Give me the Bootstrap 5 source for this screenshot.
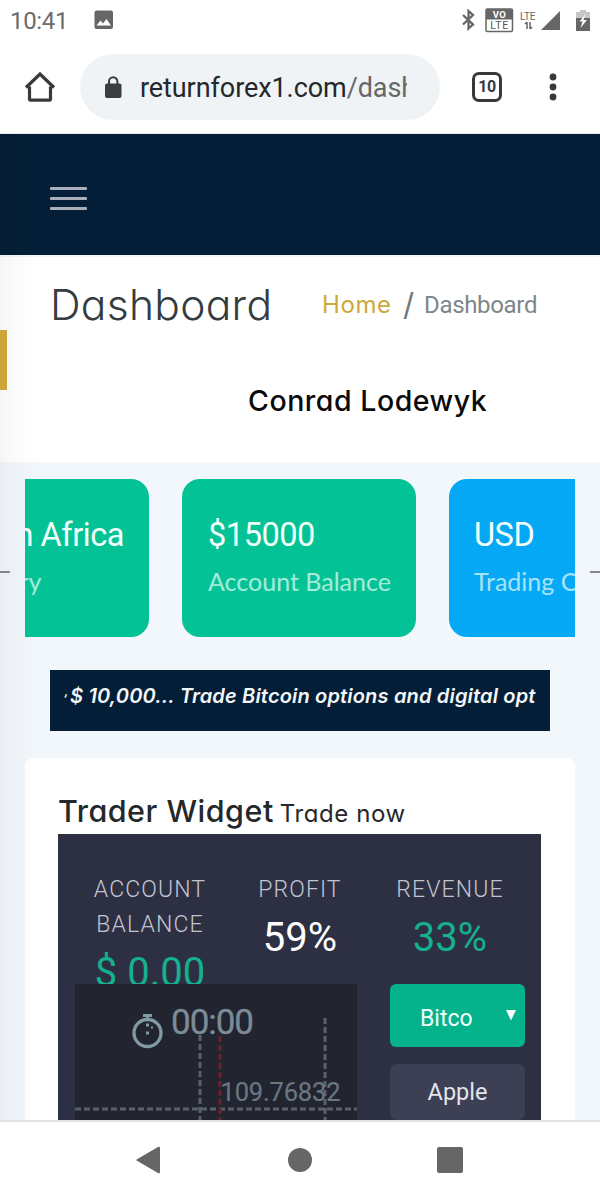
<!DOCTYPE html>
<html lang="en">
<head>
<meta charset="utf-8">
<meta name="viewport" content="width=device-width, initial-scale=1">
<title>Dashboard</title>
<link href="https://cdn.jsdelivr.net/npm/bootstrap@5.3.0/dist/css/bootstrap.min.css" rel="stylesheet">
<script src="https://cdn.jsdelivr.net/npm/bootstrap@5.3.0/dist/js/bootstrap.bundle.min.js"></script>
<style>
  body { width: 600px; height: 1200px; overflow: hidden; background: #fff; font-family: Roboto, "Liberation Sans", sans-serif; }
  svg { display: block; flex: none; }
  .geo { font-family: Inter, "Open Sans", sans-serif; font-feature-settings: "cv11"; }
  .nowrap { white-space: nowrap; }

  .status { height: 40px; padding: 0 9px 0 10px; color: #6b6b6b; }
  .clock { font-size: 24px; line-height: 42px; width: 84px; letter-spacing: -.35px; padding-top: 1px; }
  .toolbar { height: 94px; padding-left: 24px; border-bottom: 1px solid #e3e9ee; }
  .omnibox { width: 360px; height: 66px; border-radius: 33px; background: #f0f3f5; margin: 1px 0 0 24px; padding-left: 24px; }
  .url { width: 267px; margin: 2px 0 0 18px; font-size: 27px; letter-spacing: -.08px; color: #24282b; }
  .url i { font-style: normal; color: #64686b; }
  .tabs { width: 30px; height: 30px; border: 3px solid #37393b; border-radius: 7px; font-size: 16px; font-weight: 700; letter-spacing: -.5px; color: #37393b; margin-left: 32px; padding-top: 1px; }

  .page { height: 986px; background: #f2f7fc; }
  .edge-shade { left: 0; top: 0; width: 36px; height: 986px; background: linear-gradient(90deg, rgba(0,0,0,.035), rgba(0,0,0,.02) 40%, transparent); z-index: 3; }
  .topnav { height: 121px; background: #041e37; padding: 8px 0 0 50px; }
  .burger { display: grid; gap: 7px; width: 37px; }
  .burger b { height: 3.2px; background: #a9aebb; border-radius: 1px; }
  .pagehead { margin-top: 2px; height: 205px; background: #fff; }
  .headline { height: 96px; padding-left: 50px; }
  .headline h1 { font-size: 42.500px; font-weight: 300; color: #343c40; margin: 0; width: 272px; line-height: 96px; letter-spacing: .3px; }
  .crumb-home { color: #cda83b; font-size: 24px; width: 81px; letter-spacing: .6px; }
  .crumb-sep { color: #6f777c; font-size: 31px; width: 21px; }
  .crumb-now { color: #7d8689; font-size: 24px; letter-spacing: -.33px; }
  .person { padding-left: 248px; font-size: 28.500px; font-weight: 500; color: #0a0a0a; line-height: 42px; margin-top: 27px; letter-spacing: .53px; }
  .gold-tab { left: 0; top: 196px; width: 7px; height: 60px; background: #cda438; z-index: 4; }

  .carousel-row { height: 158px; margin-top: 17px; }
  .arrow { width: 10px; height: 2px; background: #85898f; margin-top: 27px; }
  .track { width: 550px; overflow: hidden; }
  .stat { flex: none; width: 234px; margin-right: 33px; height: 158px; border-radius: 18px; background: #03c396; color: #f2fffb; padding: 36px 0 0 26px; }
  .stat:first-child { margin-left: -110px; padding-left: 16px; }
  .stat.sky { background: #04a8f5; padding-left: 25px; }
  .stat-main { font-size: 32.500px; line-height: 40px; letter-spacing: -.45px; }
  .stat-sub { font-family: Lato, sans-serif; font-size: 25px; line-height: 30px; margin-top: 11px; opacity: .68; }

  .ticker { height: 61px; margin: 33px 50px 0; padding: 0 13px; background: #041e37; color: #f3f6f9; }
  .ticker div { font-size: 20px; font-weight: 600; font-style: italic; line-height: 53px; letter-spacing: .17px; }
  .ticker small { display: inline-block; width: 7px; font-size: 12px; letter-spacing: 0; }
  .panel { height: 362px; margin: 27px 25px 0; padding: 32px 34px 0 33px; background: #fff; border-radius: 8px 8px 0 0; }
  .panel h2 { font-size: 30.500px; font-weight: 500; line-height: 42px; height: 44px; margin: 0; color: #25282a; letter-spacing: .5px; }
  .panel h2 small { font-size: 24px; font-weight: 400; line-height: 30px; margin-left: 6px; letter-spacing: .6px; }
  .widget { height: 286px; background: #2d3043; padding: 38px 16px 0 17px; overflow: hidden; }
  .figures { height: 112px; overflow: hidden; text-align: center; }
  .fig-label { font-size: 23px; font-weight: 300; line-height: 35px; letter-spacing: 1.1px; color: #c2c4d0; }
  .fig-val { font-size: 40px; line-height: 62px; color: #fff; }
  .green { color: #15b08d; }
  .chart { width: 282px; height: 136px; background: #222430; }
  .side { width: 135px; }
  .pick { height: 63px; border-radius: 6px; background: #04b28b; color: #f2fffb; font-size: 23px; line-height: 70px; padding: 0 9px 0 30px; }
  .pick span { width: 54px; }
  .opt { height: 56px; margin-top: 17px; border-radius: 7px; background: #3d4055; color: #e3e4ec; font-size: 23.5px; line-height: 56px; text-align: center; }

  .softkeys { height: 80px; border-top: 2px solid #e2e2e5; background: #fff; padding: 0 137px 2px 136px; }
</style>
</head>
<body>
<header>
  <div class="status d-flex align-items-center">
    <div class="clock">10:41</div>
    <svg width="20" height="20" viewBox="0 0 20 20"><rect x=".5" y=".5" width="18.5" height="18.5" rx="2" fill="#666"/><path d="M2.500 15.500 6.500 10.500 9 13.500 12.500 9 17 15.500z" fill="#fff"/></svg>
    <svg class="ms-auto" width="15" height="22" viewBox="0 0 15 22"><path d="M2 6 12 15.500 7.500 19.500V2L12 6 2 15.500" fill="none" stroke="#666" stroke-width="2.300"/></svg>
    <svg style="margin-left:9px" width="29" height="25" viewBox="0 0 29 25"><rect x="1" y="1" width="26.500" height="22.500" rx="1.500" fill="#fff" stroke="#666" stroke-width="1.500"/><path d="M1 1h26.500v10.500H1z" fill="#666"/><text x="14.200" y="9.800" font-size="9.500" font-weight="700" fill="#fff" text-anchor="middle" textLength="13">VO</text><text x="14.200" y="21.300" font-size="10.500" fill="#555" text-anchor="middle" textLength="18">LTE</text></svg>
    <svg style="margin-left:6px" width="17" height="24" viewBox="0 0 17 24"><text x="0" y="11.500" font-size="10" fill="#666" textLength="15.500">LTE</text><path d="M7 21v-7M5 16l2-2M10 14v7M10 21l2-2" fill="none" stroke="#666" stroke-width="1.500"/></svg>
    <svg style="margin:1px 0 0 4px" width="20" height="20" viewBox="0 0 20 20"><path d="M19 0v19H0z" fill="#666"/></svg>
    <svg style="margin:1px 0 0 15px" width="15" height="22" viewBox="0 0 15 22"><path d="M4 0h6v2h4v7H0V2h4z" fill="#c6c6c6"/><path d="M0 8h14v13H0z" fill="#666"/><path d="M9.500 4 3.500 11.500h3L4.500 18 11 10H7.500z" fill="#fff"/></svg>
  </div>
  <div class="toolbar d-flex align-items-center">
    <svg width="32" height="32" viewBox="0 0 32 32"><path d="M5.500 15.500V28q0 1.200 1.200 1.200h18.600q1.200 0 1.200-1.200V15.500M2 16.500 16 3l14 13.500" fill="none" stroke="#37393b" stroke-width="3.200"/></svg>
    <div class="omnibox d-flex align-items-center">
      <svg width="18" height="23" viewBox="0 0 18 23"><rect x="1" y="7.500" width="16.500" height="14.500" rx="2" fill="#3a3c3f"/><path d="M5 9V5.500a4.200 4.200 0 0 1 8.400 0V9" fill="none" stroke="#3a3c3f" stroke-width="2"/></svg>
      <div class="url nowrap overflow-hidden">returnforex1.com<i>/dash</i></div>
    </div>
    <div class="tabs d-flex align-items-center justify-content-center">10</div>
    <svg style="margin-left:46px" width="10" height="28" viewBox="0 0 10 28" fill="#37393b"><circle cx="5" cy="4" r="3.400"/><circle cx="5" cy="14" r="3.400"/><circle cx="5" cy="24" r="3.400"/></svg>
  </div>
</header>

<main class="page position-relative overflow-hidden">
  <div class="edge-shade position-absolute"></div>
  <div class="gold-tab position-absolute"></div>
  <nav class="topnav d-flex align-items-center"><div class="burger"><b></b><b></b><b></b></div></nav>

  <section class="pagehead overflow-hidden">
    <div class="headline d-flex align-items-center nowrap">
      <h1 class="geo">Dashboard</h1>
      <span class="crumb-home geo">Home</span><span class="crumb-sep geo">/</span><span class="crumb-now">Dashboard</span>
    </div>
    <div class="person geo nowrap">Conrad Lodewyk</div>
  </section>

  <section class="carousel-row d-flex align-items-center">
    <div class="arrow"></div>
    <div class="track d-flex nowrap mx-auto">
      <div class="stat"><div class="stat-main text-end" style="padding-right:25px">South Africa</div><div class="stat-sub" style="padding-left:21px">Country</div></div>
      <div class="stat"><div class="stat-main">$15000</div><div class="stat-sub">Account Balance</div></div>
      <div class="stat sky"><div class="stat-main">USD</div><div class="stat-sub">Trading Currency</div></div>
    </div>
    <div class="arrow"></div>
  </section>

  <section class="ticker geo"><div class="nowrap"><small>‘</small>$ 10,000... Trade Bitcoin options and digital opt</div></section>

  <section class="panel">
    <h2 class="geo nowrap d-flex align-items-baseline"><span>Trader Widget</span><small>Trade now</small></h2>
    <div class="widget">
      <div class="figures row g-0">
        <div class="col-4"><div class="fig-label">ACCOUNT BALANCE</div><div class="fig-val green">$ 0.00</div></div>
        <div class="col-4"><div class="fig-label">PROFIT</div><div class="fig-val">59%</div></div>
        <div class="col-4"><div class="fig-label">REVENUE</div><div class="fig-val green">33%</div></div>
      </div>
      <div class="d-flex justify-content-between">
        <div class="chart">
          <svg width="282" height="136" viewBox="0 0 282 136">
            <g fill="none" stroke="#58616c" stroke-width="3" stroke-dasharray="6 3"><path d="M125 51v85M250 34v102M0 125h282"/></g>
            <path d="M145 52v84" stroke="#6f1f2c" stroke-width="3" stroke-dasharray="6 3"/>
            <circle cx="72.500" cy="49" r="13.500" fill="none" stroke="#809aa5" stroke-width="3.300"/>
            <path d="M68 31.500h9M72.500 31v6" stroke="#809aa5" stroke-width="3"/>
            <path d="M71 39.500h3v3h-3zM71 47.500h3v3h-3zM76 42.500h2v2h-2z" fill="#809aa5"/>
            <text x="96" y="50" font-size="35" fill="#7c8c97" stroke="#7c8c97" stroke-width=".3" textLength="83">00:00</text>
            <text x="145.500" y="117" font-size="25.500" fill="#6a7681" stroke="#6a7681" stroke-width=".2" textLength="120">109.76832</text>
          </svg>
        </div>
        <div class="side">
          <div class="pick d-flex"><span>Bitco</span><svg class="ms-auto" style="margin-top:25px" width="10" height="12" viewBox="0 0 10 12"><path d="M0 1h10L5 11.500z" fill="#fff"/></svg></div>
          <div class="opt">Apple</div>
        </div>
      </div>
    </div>
  </section>
</main>

<footer class="softkeys d-flex align-items-center justify-content-between">
  <svg width="24" height="28" viewBox="0 0 24 28"><path d="M1 13.200 22 1q2-1 2 1v24q0 2-2 1L1 14.800q-1.500-.8 0-1.600z" fill="#666"/></svg>
  <svg style="margin-left:2px" width="24" height="24" viewBox="0 0 24 24"><circle cx="12" cy="12" r="12" fill="#666"/></svg>
  <svg width="26" height="26" viewBox="0 0 26 26"><rect width="26" height="26" rx="2" fill="#666"/></svg>
</footer>
</body>
</html>
